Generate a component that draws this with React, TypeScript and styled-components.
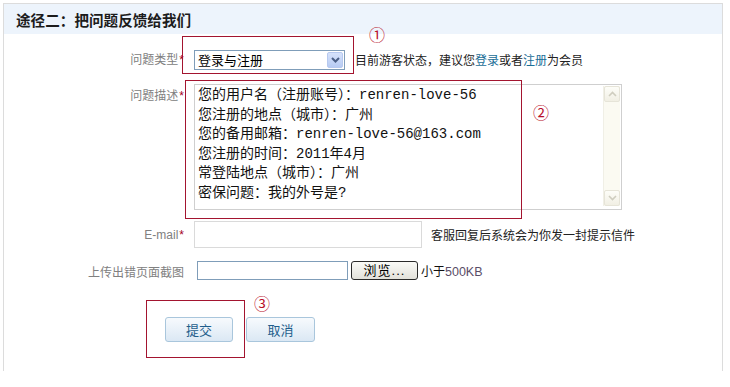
import React from "react";
import styled, { createGlobalStyle } from "styled-components";

const Global = createGlobalStyle`
  html, body { margin: 0; padding: 0; background: #fff; }
  body { font-family: "Liberation Sans", "Noto Sans CJK SC", sans-serif; font-size: 12px; color: #222; }
`;

const Page = styled.div`
  position: relative;
  padding: 3px 0 0 3px;
  width: 730px;
  height: 387px;
  box-sizing: border-box;
`;

const Panel = styled.div`
  width: 720px;
  box-sizing: border-box;
  border: 1px solid #dcdcdc;
  border-bottom: none;
`;

const Header = styled.div`
  height: 30px;
  background: #edf4fc;
  display: flex;
  align-items: center;
  padding-left: 12px;
`;

const Title = styled.h2`
  margin: 0;
  font-family: "Noto Sans CJK SC", sans-serif;
  font-size: 14.6px;
  font-weight: 700;
  color: #1c1c1c;
  letter-spacing: 0;
`;

const Form = styled.div`
  display: flex;
  flex-direction: column;
  padding-bottom: 29px;
`;

const Row = styled.div<{ $mt: number; $h: number; $align?: string }>`
  display: flex;
  align-items: ${(p) => p.$align || "center"};
  margin-top: ${(p) => p.$mt}px;
  height: ${(p) => p.$h}px;
`;

const Label = styled.div<{ $pt?: number; $dy?: number }>`
  width: 180px;
  flex: none;
  text-align: right;
  color: #808080;
  font-size: 12px;
  line-height: 20px;
  padding-top: ${(p) => p.$pt || 0}px;
  position: relative;
  top: ${(p) => p.$dy || 0}px;
  white-space: nowrap;
`;

const Star = styled.span`
  color: #a3001c;
  font-family: "Liberation Sans", sans-serif;
  font-size: 12px;
  margin-left: 1px;
`;

const Field = styled.div<{ $ml?: number }>`
  display: flex;
  align-items: center;
  margin-left: ${(p) => (p.$ml ?? 10)}px;
  height: 100%;
`;

const Select = styled.div`
  width: 151px;
  height: 20px;
  box-sizing: border-box;
  border: 1px solid #7f9db9;
  display: flex;
  align-items: center;
  justify-content: space-between;
  padding: 0 1px 0 3px;
  font-size: 13px;
  color: #000;
  background: #fff;
`;

const SelectArrow = styled.span`
  width: 16px;
  height: 16px;
  box-sizing: border-box;
  border: 1px solid #b7c9ef;
  border-radius: 2px;
  background: linear-gradient(#d6e2fb, #b7cbf3);
  display: flex;
  align-items: center;
  justify-content: center;
`;

const Note = styled.span<{ $ml: number }>`
  margin-left: ${(p) => p.$ml}px;
  color: #222;
  font-size: 12px;
  white-space: nowrap;
`;

const Link = styled.a`
  color: #1a6d96;
  text-decoration: none;
`;

const TextBox = styled.div`
  width: 428px;
  height: 126px;
  box-sizing: border-box;
  border: 1px solid #cfcfcf;
  display: flex;
  background: #fff;
`;

const TextContent = styled.div`
  flex: 1;
  padding: 1px 3px;
  font-family: "Liberation Mono", "Noto Sans CJK SC", monospace;
  font-size: 14px;
  line-height: 19.6px;
  color: #111;
  white-space: pre;
`;

const ScrollBar = styled.div`
  width: 16px;
  flex: none;
  margin: 1px 1px 3px 0;
  background: #fbfaf2;
  border-left: 1px solid #f0efe6;
  display: flex;
  flex-direction: column;
  justify-content: space-between;
`;

const ScrollBtn = styled.span`
  height: 16px;
  box-sizing: border-box;
  border: 1px solid #e6e4d8;
  border-radius: 2px;
  background: linear-gradient(#fdfdf8, #f1efe4);
  display: flex;
  align-items: center;
  justify-content: center;
`;

const Input = styled.div<{ $w: number; $h: number; $border: string }>`
  width: ${(p) => p.$w}px;
  height: ${(p) => p.$h}px;
  box-sizing: border-box;
  border: 1px solid ${(p) => p.$border};
  background: #fff;
`;

const BrowseBtn = styled.button`
  margin-left: 3px;
  width: 67px;
  height: 19px;
  box-sizing: border-box;
  border: 1px solid #2a2a2a;
  border-radius: 3px;
  background: linear-gradient(#fafaf7, #e2e1da);
  font-family: "Liberation Sans", "Noto Sans CJK SC", sans-serif;
  font-size: 13px;
  color: #000;
  padding: 0;
  line-height: 16px;
  letter-spacing: 1px;
`;

const Size = styled.span`
  margin-left: 3px;
  font-size: 12px;
  color: #111;
  white-space: nowrap;
`;

const SizeNum = styled.span`
  font-family: "Liberation Sans", sans-serif;
  font-size: 12.5px;
  color: #5a4d68;
`;

const Buttons = styled.div`
  display: flex;
  gap: 13px;
  margin-top: 37px;
  padding-left: 161px;
`;

const Btn = styled.button<{ $w: number }>`
  width: ${(p) => p.$w}px;
  height: 25px;
  box-sizing: border-box;
  border: 1px solid #a9c6dc;
  border-radius: 3px;
  background: linear-gradient(#f7fafd, #dbe8f4);
  color: #1f5e8c;
  font-family: "Noto Sans CJK SC", sans-serif;
  font-size: 13px;
  padding: 0;
`;

const Mark = styled.div<{ $x: number; $y: number; $w: number; $h: number }>`
  position: absolute;
  left: ${(p) => p.$x}px;
  top: ${(p) => p.$y}px;
  width: ${(p) => p.$w}px;
  height: ${(p) => p.$h}px;
  box-sizing: border-box;
  border: 1px solid #a3142f;
  pointer-events: none;
`;

const Num = styled.span<{ $x: number; $y: number }>`
  position: absolute;
  left: ${(p) => p.$x}px;
  top: ${(p) => p.$y}px;
  transform: translate(-50%, -50%);
  color: #b80f2a;
  font-family: "Noto Sans CJK SC", sans-serif;
  font-size: 16px;
  line-height: 1;
`;

const Chevron = ({ dir, color, w = 2 }: { dir: "up" | "down"; color: string; w?: number }) => (
  <svg width="9" height="6" viewBox="0 0 9 6">
    <path
      d={dir === "down" ? "M1 1 L4.5 4.5 L8 1" : "M1 5 L4.5 1.5 L8 5"}
      fill="none"
      stroke={color}
      strokeWidth={w}
    />
  </svg>
);

const lines = [
  "您的用户名（注册账号）：renren-love-56",
  "您注册的地点（城市）：广州",
  "您的备用邮箱：renren-love-56@163.com",
  "您注册的时间：2011年4月",
  "常登陆地点（城市）：广州",
  "密保问题：我的外号是?",
];

export default function App() {
  return (
    <>
      <Global />
      <Page>
        <Panel>
          <Header>
            <Title>途径二：把问题反馈给我们</Title>
          </Header>
          <Form>
            <Row $mt={15} $h={21}>
              <Label>
                问题类型<Star>*</Star>
              </Label>
              <Field>
                <Select>
                  <span>登录与注册</span>
                  <SelectArrow>
                    <Chevron dir="down" color="#4b5f86" />
                  </SelectArrow>
                </Select>
                <Note $ml={10}>
                  目前游客状态，建议您<Link>登录</Link>或者<Link>注册</Link>为会员
                </Note>
              </Field>
            </Row>
            <Row $mt={14} $h={126} $align="flex-start">
              <Label $pt={2}>
                问题描述<Star>*</Star>
              </Label>
              <Field>
                <TextBox>
                  <TextContent>{lines.join("\n")}</TextContent>
                  <ScrollBar>
                    <ScrollBtn>
                      <Chevron dir="up" color="#cfcdbf" w={1.6} />
                    </ScrollBtn>
                    <ScrollBtn>
                      <Chevron dir="down" color="#cfcdbf" w={1.6} />
                    </ScrollBtn>
                  </ScrollBar>
                </TextBox>
              </Field>
            </Row>
            <Row $mt={11} $h={27}>
              <Label>
                E-mail<Star>*</Star>
              </Label>
              <Field>
                <Input $w={228} $h={27} $border="#dadada" />
                <Note $ml={9}>客服回复后系统会为你发一封提示信件</Note>
              </Field>
            </Row>
            <Row $mt={13} $h={19}>
              <Label $dy={2}>上传出错页面截图</Label>
              <Field $ml={13}>
                <Input $w={151} $h={19} $border="#7f9db9" />
                <BrowseBtn>浏览...</BrowseBtn>
                <Size>
                  小于<SizeNum>500KB</SizeNum>
                </Size>
              </Field>
            </Row>
            <Buttons>
              <Btn $w={68}>提交</Btn>
              <Btn $w={69}>取消</Btn>
            </Buttons>
          </Form>
        </Panel>
        <Mark $x={182} $y={36} $w={172} $h={38} />
        <Num $x={377} $y={34}>①</Num>
        <Mark $x={185} $y={80} $w={337} $h={139} />
        <Num $x={541} $y={112}>②</Num>
        <Mark $x={146} $y={300} $w={99} $h={58} />
        <Num $x={262} $y={303}>③</Num>
      </Page>
    </>
  );
}
